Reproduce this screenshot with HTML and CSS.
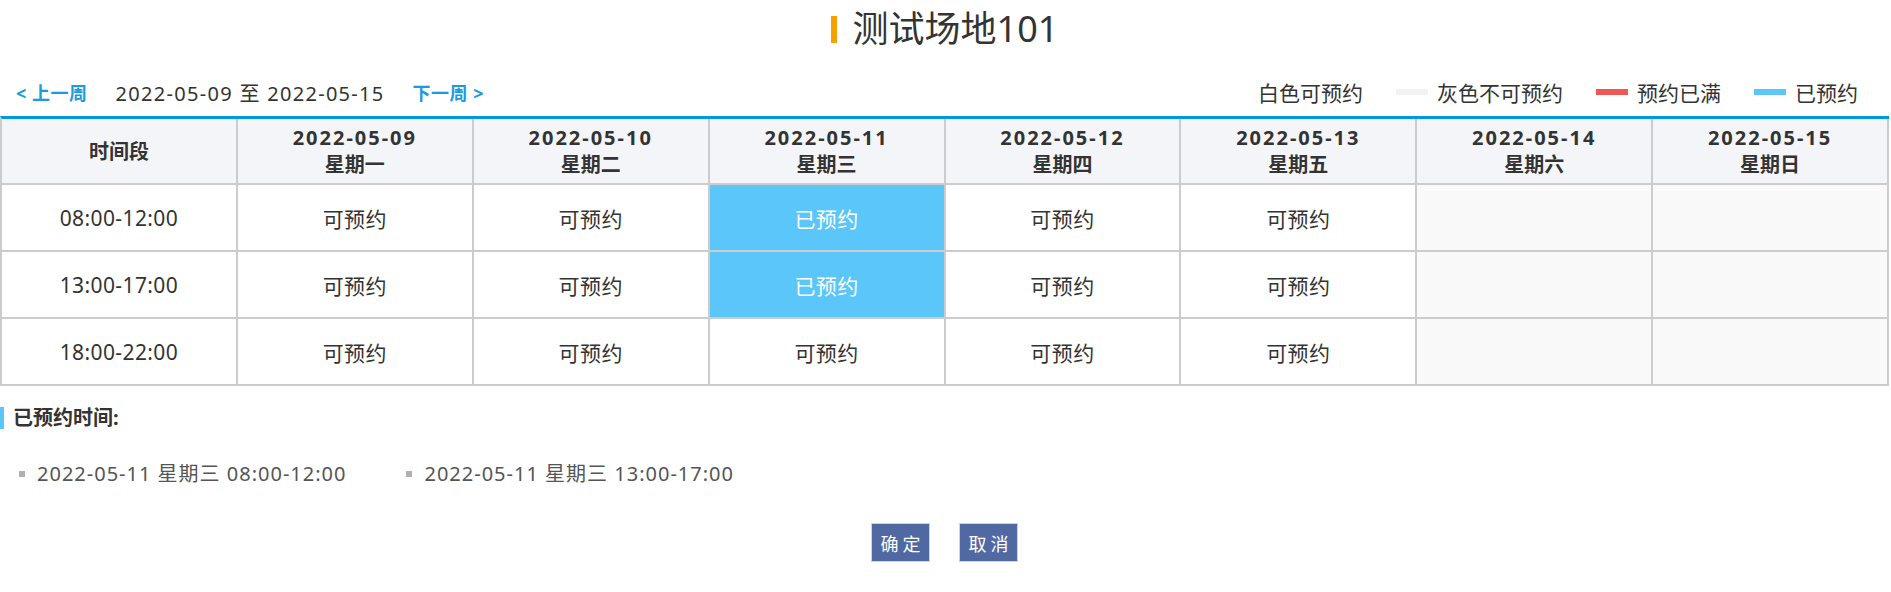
FILE: index.html
```html
<!DOCTYPE html>
<html lang="zh-CN">
<head>
    <meta charset="UTF-8">
    <meta name="viewport" content="width=device-width, initial-scale=1.0">
    <title>测试场地101 - 场地预约</title>
    <link rel="stylesheet" href="styles.css">
</head>
<body>
    <div class="page">
        <div class="title">
            <span class="title-bar"></span>
            <h1>测试场地101</h1>
        </div>

        <div class="toolbar">
            <div class="week-nav">
                <a class="nav-link" href="#">&lt; 上一周</a>
                <span class="week-range">2022-05-09 至 2022-05-15</span>
                <a class="nav-link" href="#">下一周 &gt;</a>
            </div>
            <div class="legend">
                <span class="legend-item"><i class="swatch swatch-white"></i>白色可预约</span>
                <span class="legend-item"><i class="swatch swatch-gray"></i>灰色不可预约</span>
                <span class="legend-item"><i class="swatch swatch-red"></i>预约已满</span>
                <span class="legend-item"><i class="swatch swatch-blue"></i>已预约</span>
            </div>
        </div>

        <table class="schedule">
            <thead>
                <tr>
                    <th>时间段</th>
                    <th><span class="date">2022-05-09</span><br>星期一</th>
                    <th><span class="date">2022-05-10</span><br>星期二</th>
                    <th><span class="date">2022-05-11</span><br>星期三</th>
                    <th><span class="date">2022-05-12</span><br>星期四</th>
                    <th><span class="date">2022-05-13</span><br>星期五</th>
                    <th><span class="date">2022-05-14</span><br>星期六</th>
                    <th><span class="date">2022-05-15</span><br>星期日</th>
                </tr>
            </thead>
            <tbody>
                <tr>
                    <td>08:00-12:00</td>
                    <td>可预约</td>
                    <td>可预约</td>
                    <td class="booked">已预约</td>
                    <td>可预约</td>
                    <td>可预约</td>
                    <td class="closed"></td>
                    <td class="closed"></td>
                </tr>
                <tr>
                    <td>13:00-17:00</td>
                    <td>可预约</td>
                    <td>可预约</td>
                    <td class="booked">已预约</td>
                    <td>可预约</td>
                    <td>可预约</td>
                    <td class="closed"></td>
                    <td class="closed"></td>
                </tr>
                <tr>
                    <td>18:00-22:00</td>
                    <td>可预约</td>
                    <td>可预约</td>
                    <td>可预约</td>
                    <td>可预约</td>
                    <td>可预约</td>
                    <td class="closed"></td>
                    <td class="closed"></td>
                </tr>
            </tbody>
        </table>

        <h3 class="section-title">已预约时间:</h3>
        <ul class="booked-list">
            <li>2022-05-11 星期三 08:00-12:00</li>
            <li>2022-05-11 星期三 13:00-17:00</li>
        </ul>

        <div class="actions">
            <button class="btn">确定</button>
            <button class="btn">取消</button>
        </div>
    </div>
</body>
</html>
```

FILE: styles.css
```css
body {
    margin: 0;
    padding: 0;
    font-family: "Noto Sans", "Noto Sans CJK SC", sans-serif;
    color: #333;
    background: #fff;
}
.page {
    margin-right: 2px;
}
.title {
    display: flex;
    align-items: center;
    justify-content: center;
    height: 58px;
}
.title-bar {
    width: 6px;
    height: 27px;
    background: #f5a200;
    margin-right: 16px;
}
.title h1 {
    margin: 0;
    font-size: 36px;
    font-weight: normal;
    line-height: 58px;
    color: #333;
}
.toolbar {
    display: flex;
    align-items: center;
    justify-content: space-between;
    box-sizing: border-box;
    height: 58px;
    padding: 10px 31px 0 16px;
}
.week-nav {
    display: flex;
    align-items: center;
    gap: 28px;
}
.nav-link {
    color: #1a9be0;
    font-size: 18px;
    font-weight: bold;
    letter-spacing: 0.5px;
    text-decoration: none;
}
.week-range {
    font-size: 20px;
    letter-spacing: 1.3px;
}
.legend {
    display: flex;
    align-items: center;
    gap: 33px;
    font-size: 21px;
}
.legend-item {
    display: flex;
    align-items: center;
}
.swatch {
    display: inline-block;
    width: 32px;
    height: 6px;
    margin-right: 9px;
}
.swatch-white {
    background: #fff;
}
.swatch-gray {
    background: #f2f2f2;
}
.swatch-red {
    background: #ef5656;
}
.swatch-blue {
    background: #5bc6fa;
}
.schedule {
    width: 100%;
    border-collapse: separate;
    border-spacing: 0;
    table-layout: fixed;
    border-top: 3px solid #0099e0;
    border-left: 2px solid #ccc;
}
.schedule th,
.schedule td {
    border-right: 2px solid #ccc;
    border-bottom: 2px solid #ccc;
    text-align: center;
    padding: 0;
}
.schedule th {
    height: 64px;
    background: #f4f5f9;
    font-size: 20px;
    font-weight: bold;
    line-height: 27px;
}
.schedule th .date {
    letter-spacing: 2px;
}
.schedule td {
    height: 65px;
    font-size: 21px;
    letter-spacing: 0.4px;
}
.schedule td.booked {
    background: #5bc6fa;
    color: #fff;
}
.schedule td.closed {
    background: #f9f9f9;
}
.section-title {
    margin: 21px 0 0;
    padding-left: 9px;
    border-left: 4px solid #5bc6fa;
    font-size: 20px;
    line-height: 22px;
    color: #333;
}
.booked-list {
    display: flex;
    gap: 60px;
    list-style: none;
    margin: 30px 0 0;
    padding: 0 0 0 19px;
}
.booked-list li {
    display: flex;
    align-items: center;
    font-size: 20px;
    line-height: 30px;
    letter-spacing: 1px;
    color: #555;
}
.booked-list li::before {
    content: "";
    width: 6px;
    height: 6px;
    margin-right: 12px;
    background: #b0b0b0;
}
.actions {
    display: flex;
    justify-content: center;
    gap: 29px;
    margin-top: 34px;
}
.btn {
    width: 59px;
    height: 39px;
    padding: 0;
    border: 1px solid #c5d6ec;
    background: #5069a3;
    color: #fff;
    font-family: inherit;
    font-size: 18px;
    letter-spacing: 4px;
    text-indent: 4px;
    cursor: pointer;
}
```
